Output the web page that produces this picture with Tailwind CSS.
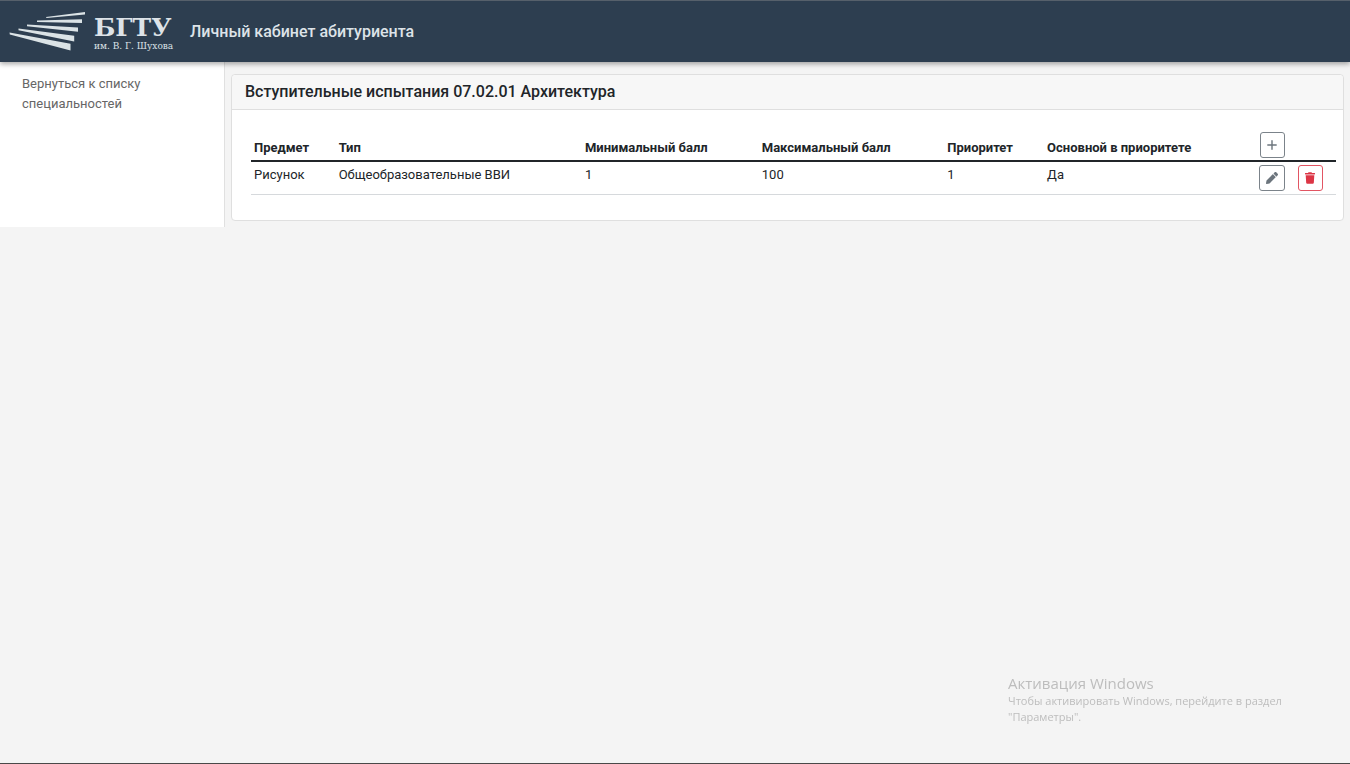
<!DOCTYPE html>
<html lang="ru">
<head>
<meta charset="utf-8">
<meta name="viewport" content="width=device-width, initial-scale=1">
<title>Личный кабинет абитуриента</title>
<script src="https://cdn.jsdelivr.net/npm/@tailwindcss/browser@4"></script>
</head>
<body class="min-h-screen flex flex-col bg-[#f4f4f4] font-['Roboto',sans-serif] text-[13px] leading-5 text-[#212529]">
<header class="relative z-10 h-[62px] shrink-0 flex items-center border-t border-[#56606b] bg-[#2d3e50] pl-[9px] text-[#dde3e8] shadow-[0_2px_5px_rgba(0,0,0,0.35)]">
  <a href="#" class="flex w-[181px] shrink-0 items-start gap-2" aria-label="БГТУ им. В. Г. Шухова">
    <svg class="w-[77px] h-10 shrink-0" viewBox="0 0 77 40" fill="#dbe3e6" aria-hidden="true">
      <path d="M37 4.900L76 0V2.600L37.500 6zM28 8.500L73 7.300V11.100L28 10.100zM18 12.500L69 15.500V19.800L18 14.200zM9.500 16.500L65.200 23.700V29.400L9.500 18.200zM.5 20.500L61.500 31.700V38.500L.8 22.500z"/>
    </svg>
    <span class="flex flex-col pt-1 whitespace-nowrap font-['DejaVu_Serif',serif]">
      <span class="text-[25px] leading-6 font-bold">БГТУ</span>
      <span class="text-[9px] leading-3">им. В. Г. Шухова</span>
    </span>
  </a>
  <h1 class="text-[16px] leading-6 font-medium">Личный кабинет абитуриента</h1>
</header>
<div class="flex">
  <nav class="w-[225px] shrink-0 border-r border-[#e0e0e0] bg-white px-[22px] pt-3">
    <a href="#" class="block text-[#666]">Вернуться к списку специальностей</a>
  </nav>
  <main class="min-w-0 flex-1 px-[6px] pt-3 pb-[6px]">
    <section class="rounded border border-[#dfdfdf] bg-white">
      <h2 class="rounded-t border-b border-[#dfdfdf] bg-[#f7f7f7] px-[13px] py-[5px] text-[16px] leading-6 font-medium">Вступительные испытания 07.02.01 Архитектура</h2>
      <div class="pl-[19px] pr-[7px] pt-5 pb-[25px]">
        <table class="w-full table-fixed border-collapse text-left">
          <colgroup>
            <col class="w-[7.8%]"><col class="w-[22.7%]"><col class="w-[16.3%]"><col class="w-[17.1%]"><col class="w-[9.2%]"><col class="w-[19.5%]"><col class="w-[3.6%]"><col class="w-[3.8%]">
          </colgroup>
          <thead>
            <tr class="border-b-2 border-[#212529]">
              <th scope="col" class="px-[3px] pb-[2px] align-bottom font-bold">Предмет</th>
              <th scope="col" class="px-[3px] pb-[2px] align-bottom font-bold">Тип</th>
              <th scope="col" class="px-[3px] pb-[2px] align-bottom font-bold">Минимальный балл</th>
              <th scope="col" class="px-[3px] pb-[2px] align-bottom font-bold">Максимальный балл</th>
              <th scope="col" class="px-[3px] pb-[2px] align-bottom font-bold">Приоритет</th>
              <th scope="col" class="px-[3px] pb-[2px] align-bottom font-bold">Основной в приоритете</th>
              <th colspan="2" class="pl-1 pt-[2px] pb-[2px] align-bottom">
                <button type="button" aria-label="Добавить" class="flex h-[26px] w-[25px] items-center justify-center rounded-[3px] border border-[#7b838a] bg-white pb-px text-[#6c757d]">
                  <svg class="size-[10px]" viewBox="0 0 10 10" fill="none" stroke="currentColor" stroke-width="1.4" stroke-linecap="round"><path d="M5 .8V9.200M.8 5H9.200"/></svg>
                </button>
              </th>
            </tr>
          </thead>
          <tbody>
            <tr class="border-b border-[#d6d9dc]">
              <td class="px-[3px] pt-[3px] align-top">Рисунок</td>
              <td class="px-[3px] pt-[3px] align-top">Общеобразовательные ВВИ</td>
              <td class="px-[3px] pt-[3px] align-top">1</td>
              <td class="px-[3px] pt-[3px] align-top">100</td>
              <td class="px-[3px] pt-[3px] align-top">1</td>
              <td class="px-[3px] pt-[3px] align-top">Да</td>
              <td class="px-[3px] pt-[3px] pb-[3px] align-top">
                <button type="button" aria-label="Редактировать" class="flex size-[26px] items-center justify-center rounded-[3px] border border-[#7b838a] bg-white text-[#6c757d]">
                  <svg class="size-3" viewBox="0 0 512 512" fill="currentColor"><path d="M498 142l-46 46c-5 5-12 5-17 0L324 77c-5-5-5-12 0-17l46-46c19-19 49-19 68 0l60 60c19 19 19 49 0 68zM284 100L22 362 0 484c-3 16 12 30 28 28l122-22 262-262c5-5 5-12 0-17L301 100c-5-5-12-5-17 0z"/></svg>
                </button>
              </td>
              <td class="px-[3px] pt-[3px] pb-[3px] align-top">
                <button type="button" aria-label="Удалить" class="flex h-[26px] w-[25px] items-center justify-center rounded-[3px] border border-[#e25563] bg-white text-[#dc3545]">
                  <svg class="h-3 w-[10px]" viewBox="0 0 448 512" fill="currentColor"><path d="M432 32H312l-9-19A24 24 0 0 0 281 0H167a24 24 0 0 0-22 13l-9 19H16A16 16 0 0 0 0 48v32a16 16 0 0 0 16 16h416a16 16 0 0 0 16-16V48a16 16 0 0 0-16-16zM53 467a48 48 0 0 0 48 45h246a48 48 0 0 0 48-45l21-339H32z"/></svg>
                </button>
              </td>
            </tr>
          </tbody>
        </table>
      </div>
    </section>
  </main>
</div>
<aside class="fixed right-[42px] bottom-[39px] w-[300px] font-['Open_Sans',sans-serif] text-[#bdbdbd]">
  <p class="text-[15px] leading-5">Активация Windows</p>
  <p class="text-[11px] leading-4">Чтобы активировать Windows, перейдите в раздел<br>"Параметры".</p>
</aside>
<div class="fixed inset-x-0 bottom-0 h-px bg-[#4a4848]"></div>
</body>
</html>
